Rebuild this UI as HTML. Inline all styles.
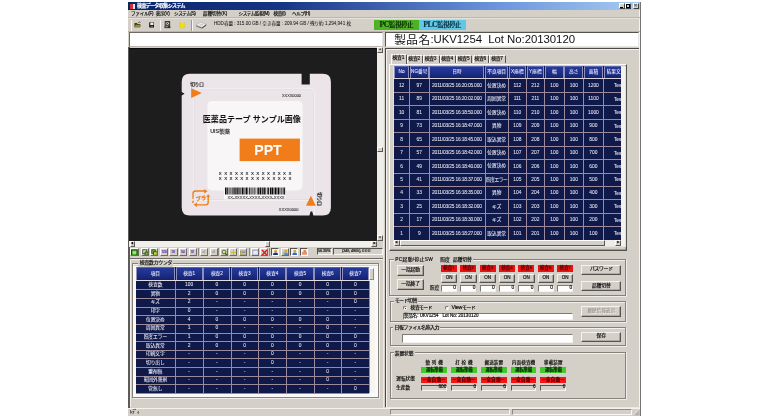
<!DOCTYPE html><html lang="ja"><head><meta charset="utf-8"><title>検査データ収集システム</title><style>
*{box-sizing:border-box;margin:0;padding:0}
html,body{width:768px;height:420px;overflow:hidden;background:#fff}
body{position:relative;filter:blur(0.4px);font-family:"Liberation Sans","Noto Sans CJK JP",sans-serif;font-size:5px;color:#000;line-height:1}
.a{position:absolute}
.t{position:absolute;white-space:nowrap;line-height:1;-webkit-text-stroke:0.18px}
.c{text-align:center}
.r{text-align:right}
.btn{position:absolute;background:#d4d0c8;border:0.8px solid;border-color:#f4f2ee #55534f #55534f #f4f2ee;box-shadow:inset -0.6px -0.6px 0 #8d8a84}
.sunk{position:absolute;background:#fff;border:0.8px solid;border-color:#7d7a74 #f4f2ee #f4f2ee #7d7a74}
.grp{position:absolute;border:0.8px solid #85827c;box-shadow:0.7px 0.7px 0 #fbfaf8, inset 0.7px 0.7px 0 #fbfaf8}
.hc{position:absolute;background:linear-gradient(180deg,#253a9c 0%,#1c2e88 55%,#15226c 100%);border:0.6px solid #8f8fba;border-top-color:#5a64a8;border-bottom:none;color:#fff}
.w{-webkit-text-stroke:0.06px}
</style></head><body>
<div class="a" style="left:128.00px;top:2.00px;width:513.00px;height:414.00px;background:#d4d0c8;"></div>
<div class="a" style="left:640.00px;top:2.00px;width:1.00px;height:414.00px;background:#777571;"></div>
<div class="a" style="left:639.00px;top:10.00px;width:1.00px;height:406.00px;background:#f6f4f0;"></div>
<div class="a" style="left:128.00px;top:2.00px;width:512.00px;height:8.00px;background:linear-gradient(90deg,#0a246a 0%,#173587 30%,#6a95dc 72%,#a6caf0 100%);"></div>
<div class="a" style="left:130.30px;top:3.60px;width:2.60px;height:5.00px;background:#c83828;"></div>
<div class="a" style="left:132.90px;top:3.60px;width:2.60px;height:5.00px;background:#dfe4f8;"></div>
<div class="t" style="left:137.00px;top:3.60px;font-size:4.9px;color:#fff;font-weight:bold;letter-spacing:-0.514px;">検査データ収集システム</div>
<div class="a" style="left:618.60px;top:3.30px;width:6.20px;height:5.50px;background:#d4d0c8;border:0.7px solid;border-color:#fff #404040 #404040 #fff"></div>
<div class="a" style="left:625.00px;top:3.30px;width:6.20px;height:5.50px;background:#d4d0c8;border:0.7px solid;border-color:#fff #404040 #404040 #fff"></div>
<div class="a" style="left:632.60px;top:3.30px;width:6.20px;height:5.50px;background:#d4d0c8;border:0.7px solid;border-color:#fff #404040 #404040 #fff"></div>
<div class="a" style="left:620.00px;top:7.00px;width:2.80px;height:0.90px;background:#000;"></div>
<div class="a" style="left:626.40px;top:4.30px;width:3.60px;height:3.40px;background:transparent;border:0.7px solid #000;border-top-width:1.3px"></div>
<div class="t" style="left:633.90px;top:3.40px;font-size:5px;color:#555;font-weight:bold">×</div>
<div class="t" style="left:131.00px;top:11.80px;font-size:4.6px;color:#111;letter-spacing:-0.279px;">ファイル(F)</div>
<div class="t" style="left:155.70px;top:11.80px;font-size:4.6px;color:#111;letter-spacing:-0.302px;">表示(V)</div>
<div class="t" style="left:174.00px;top:11.80px;font-size:4.6px;color:#111;letter-spacing:-0.411px;">システム(S)</div>
<div class="t" style="left:202.80px;top:11.80px;font-size:4.6px;color:#111;letter-spacing:0.000px;">品種切替(K)</div>
<div class="t" style="left:238.50px;top:11.80px;font-size:4.6px;color:#111;letter-spacing:-0.424px;">システム監視(M)</div>
<div class="t" style="left:273.60px;top:11.80px;font-size:4.6px;color:#111;letter-spacing:-0.346px;">検査(I)</div>
<div class="t" style="left:291.90px;top:11.80px;font-size:4.6px;color:#111;letter-spacing:-0.345px;">ヘルプ(H)</div>
<div class="a" style="left:128.00px;top:16.90px;width:512.00px;height:0.60px;background:#bcb8b0;"></div>
<div class="a" style="left:128.00px;top:17.50px;width:512.00px;height:0.60px;background:#e4e1da;"></div>
<div class="a" style="left:128.00px;top:31.30px;width:512.00px;height:0.50px;background:#bab6ae;"></div>
<div class="a" style="left:130.50px;top:19.50px;width:0.70px;height:11.00px;background:#9c9890;"></div>
<div class="a" style="left:131.20px;top:19.50px;width:0.70px;height:11.00px;background:#f8f6f2;"></div>
<div class="a" style="left:159.50px;top:19.50px;width:0.70px;height:11.00px;background:#9c9890;"></div>
<div class="a" style="left:160.20px;top:19.50px;width:0.70px;height:11.00px;background:#f8f6f2;"></div>
<div class="a" style="left:191.30px;top:19.50px;width:0.70px;height:11.00px;background:#9c9890;"></div>
<div class="a" style="left:192.00px;top:19.50px;width:0.70px;height:11.00px;background:#f8f6f2;"></div>
<svg class="a" style="left:133.6px;top:21.2px" width="7.4" height="6.8" viewBox="0 0 10 9"><path d="M0.6 2.6 L4 2.6 L5 3.8 L8.4 3.8 L8.4 8.4 L0.6 8.4 Z" fill="#3c3b12"/><path d="M2.2 5 L9.6 5 L8.2 8.4 L0.6 8.4 Z" fill="#8f8c3a"/><path d="M5.5 2.3 Q7 0.4 8.8 2" stroke="#222" stroke-width="0.9" fill="none"/></svg>
<svg class="a" style="left:148.6px;top:21.8px" width="5.8" height="5.8" viewBox="0 0 8 8"><rect x="0.3" y="0.3" width="7.4" height="7.4" rx="0.8" fill="#111"/><rect x="1.8" y="0.8" width="4.4" height="3.4" fill="#f2f2f2"/><rect x="2.2" y="5.4" width="3.4" height="2.3" fill="#666"/></svg>
<svg class="a" style="left:164px;top:20.8px" width="7" height="7.8" viewBox="0 0 9 10"><rect x="1.5" y="0.8" width="5.8" height="4.6" fill="#e8e8e8" stroke="#111" stroke-width="1.1"/><path d="M2.5 1.5 L6.2 4.6 M6.2 1.5 L2.5 4.6" stroke="#222" stroke-width="0.9"/><rect x="0.6" y="6.2" width="7.6" height="3" fill="#333"/><rect x="2" y="7" width="3" height="0.9" fill="#ddd"/></svg>
<svg class="a" style="left:179px;top:20.8px" width="6.2" height="7.8" viewBox="0 0 8 10"><path d="M1 2.2 L3 2.2 L3.6 1 L6 1 L6.6 2.2 L7 2.2 L7 8.8 L1 8.8 Z" fill="#f5e000" stroke="#d8c400" stroke-width="0.5"/><rect x="3" y="0.4" width="2.5" height="1.5" fill="#f4f4f4" stroke="#bbb" stroke-width="0.3"/></svg>
<svg class="a" style="left:194.8px;top:20.6px" width="12.4" height="8.4" viewBox="0 0 14 10"><path d="M0.8 5 L6 1.5 L13 3.8 L8 7.6 Z" fill="#f0f0f0" stroke="#9a9a9a" stroke-width="0.5"/><path d="M0.8 5 L8 7.6 L8 9.2 L0.8 6.6 Z" fill="#7a7a7a"/><path d="M8 7.6 L13 3.8 L13 5.4 L8 9.2 Z" fill="#4a4a4a"/><ellipse cx="7" cy="4.4" rx="2.6" ry="1.2" fill="#d0d0d0"/></svg>
<div class="t" style="left:214.00px;top:21.80px;font-size:4.6px;color:#222;-webkit-text-stroke:0.05px;letter-spacing:-0.021px;">HDD容量 : 315.00 GB / 空き容量 : 209.94 GB / 残り約 1,294,941 枚</div>
<div class="a" style="left:374.00px;top:20.30px;width:44.50px;height:10.00px;background:#4db324;"></div>
<div class="t" style="left:396.20px;top:21.60px;font-size:6.6px;color:#0c2a08;transform:translateX(-50%);font-family:'Liberation Serif','Noto Serif CJK SC',serif;font-weight:bold;-webkit-text-stroke:0.1px;letter-spacing:-0.608px;"><span style="font-size:8px;line-height:0">PC</span>監視停止</div>
<div class="a" style="left:418.50px;top:20.30px;width:47.00px;height:10.00px;background:#5ec8e6;"></div>
<div class="t" style="left:442.00px;top:21.60px;font-size:6.6px;color:#0a2a38;transform:translateX(-50%);font-family:'Liberation Serif','Noto Serif CJK SC',serif;font-weight:bold;-webkit-text-stroke:0.1px;letter-spacing:-0.711px;"><span style="font-size:8px;line-height:0">PLC</span>監視停止</div>
<div class="a" style="left:128.60px;top:32.20px;width:254.60px;height:14.60px;background:#fff;border:1px solid;border-color:#6e6b66 #e8e6e0 #bdb9b0 #6e6b66"></div>
<div class="a" style="left:384.80px;top:32.00px;width:254.00px;height:15.20px;background:#fff;border:1px solid;border-color:#55534f #e8e6e0 #e8e6e0 #55534f;border-left-width:1.3px"></div>
<div class="t" style="left:394.20px;top:33.50px;font-size:11.6px;color:#111;-webkit-text-stroke:0;letter-spacing:0.534px;">製品名</div>
<div class="t" style="left:430.40px;top:33.90px;font-size:11.4px;color:#111;-webkit-text-stroke:0;letter-spacing:-0.043px;">:UKV1254&nbsp; Lot No:20130120</div>
<div class="a" style="left:128.30px;top:47.00px;width:1.30px;height:360.50px;background:#5d5b57;"></div>
<div class="a" style="left:129.30px;top:47.70px;width:248.20px;height:193.10px;background:#1d1d1d;border-top:0.8px solid #0a0a0a"></div>
<div class="a" style="left:377.30px;top:47.20px;width:5.80px;height:193.60px;background:#efede8;"></div>
<div class="a" style="left:377.40px;top:47.40px;width:5.60px;height:5.80px;background:#d4d0c8;border:0.6px solid;border-color:#fff #5a5852 #5a5852 #fff"></div>
<div class="a" style="left:377.40px;top:234.80px;width:5.60px;height:5.80px;background:#d4d0c8;border:0.6px solid;border-color:#fff #5a5852 #5a5852 #fff"></div>
<div class="a" style="left:377.40px;top:146.70px;width:5.60px;height:5.80px;background:#d4d0c8;border:0.6px solid;border-color:#fff #5a5852 #5a5852 #fff"></div>
<div class="t" style="left:378.70px;top:49.20px;font-size:2.6px;color:#000;">▲</div>
<div class="t" style="left:378.70px;top:236.60px;font-size:2.6px;color:#000;">▼</div>
<div class="a" style="left:129.30px;top:240.80px;width:248.20px;height:6.00px;background:#f1efea;"></div>
<div class="a" style="left:129.50px;top:241.00px;width:5.60px;height:5.60px;background:#d4d0c8;border:0.6px solid;border-color:#fff #5a5852 #5a5852 #fff"></div>
<div class="a" style="left:371.40px;top:241.00px;width:5.60px;height:5.60px;background:#d4d0c8;border:0.6px solid;border-color:#fff #5a5852 #5a5852 #fff"></div>
<div class="a" style="left:264.50px;top:241.00px;width:5.60px;height:5.60px;background:#d4d0c8;border:0.6px solid;border-color:#fff #5a5852 #5a5852 #fff"></div>
<div class="t" style="left:130.80px;top:242.50px;font-size:2.6px;color:#000;">◀</div>
<div class="t" style="left:373.20px;top:242.50px;font-size:2.6px;color:#000;">▶</div>
<div class="a" style="left:377.30px;top:240.80px;width:5.80px;height:6.00px;background:#d4d0c8;"></div>
<svg class="a" style="left:170px;top:60px" width="170" height="165" viewBox="170 60 170 165" font-family="'Liberation Sans','Noto Sans CJK JP',sans-serif">
<path d="M189.7 73.7 L301.6 73.7 L301.6 84.6 L309.8 84.6 L309.8 73.7 L322.9 73.7 Q330.9 73.7 330.9 81.7 L330.9 207.5 Q330.9 215.5 322.9 215.5 L313.4 215.5 L312.2 211.6 L310.6 211.6 L309.4 215.5 L189.7 215.5 Q181.7 215.5 181.7 207.5 L181.7 95.6 L184.6 93.8 L181.7 92 L181.7 81.7 Q181.7 73.7 189.7 73.7 Z" fill="#ebe5ea"/>
<rect x="193.8" y="88.4" width="120.4" height="112" rx="5" fill="none" stroke="#f6f3f5" stroke-width="0.9"/>
<path d="M314.2 195 L314.2 215" stroke="#f6f3f5" stroke-width="0.9"/>
<rect x="194.6" y="89.2" width="118.8" height="110.4" rx="4.4" fill="none" stroke="#ddd5dc" stroke-width="0.5"/>
<rect x="207.4" y="101" width="95.2" height="89.4" rx="4.5" fill="#f8f6f7"/>
<text x="190.3" y="85.6" font-size="4.2" fill="#1a1a1a" stroke="#1a1a1a" stroke-width="0.18" textLength="13.6" lengthAdjust="spacingAndGlyphs">切り口</text>
<path d="M191.2 88.2 L201.8 93.1 L191.2 98 Z" fill="#f07d1a"/>
<text x="282" y="96.5" font-size="4" fill="#222" stroke="#222" stroke-width="0.06" textLength="19" lengthAdjust="spacingAndGlyphs">XXXX0000</text>
<text x="202.8" y="122.3" font-size="8.4" font-weight="bold" fill="#111" textLength="98" lengthAdjust="spacingAndGlyphs">医薬品テープ サンプル画像</text>
<text x="210.2" y="133.2" font-size="4.9" fill="#222" stroke="#222" stroke-width="0.15" textLength="19.8" lengthAdjust="spacingAndGlyphs">UIS製薬</text>
<rect x="239.6" y="138.6" width="60.3" height="22.5" fill="#f07d1a"/>
<text x="254.2" y="155.4" font-size="14.8" font-weight="bold" fill="#fff" textLength="27.6" lengthAdjust="spacingAndGlyphs">PPT</text>
<text x="218.8" y="174.5" font-size="4.4" font-weight="bold" fill="#2a2a2a" textLength="72.6" lengthAdjust="spacing">XXXXXXXXXXXXXX</text>
<text x="218.8" y="180.4" font-size="4.4" font-weight="bold" fill="#2a2a2a" textLength="72.6" lengthAdjust="spacing">XXXXXXXXXXXXXX</text>
<rect x="224" y="186.8" width="61.4" height="12.6" fill="#f8f6f7"/>
<path d="M225.0 187.6 v6.8 h1.0 v-6.8 Z M226.4 187.6 v6.8 h1.4 v-6.8 Z M228.6 187.6 v6.8 h0.6 v-6.8 Z M229.7 187.6 v6.8 h0.6 v-6.8 Z M230.8 187.6 v6.8 h0.6 v-6.8 Z M232.2 187.6 v6.8 h0.6 v-6.8 Z M233.2 187.6 v6.8 h0.6 v-6.8 Z M234.3 187.6 v6.8 h1.4 v-6.8 Z M236.2 187.6 v6.8 h0.6 v-6.8 Z M237.2 187.6 v6.8 h1.4 v-6.8 Z M239.1 187.6 v6.8 h0.6 v-6.8 Z M240.2 187.6 v6.8 h0.6 v-6.8 Z M241.6 187.6 v6.8 h1.4 v-6.8 Z M243.4 187.6 v6.8 h0.6 v-6.8 Z M244.5 187.6 v6.8 h0.6 v-6.8 Z M245.6 187.6 v6.8 h1.4 v-6.8 Z M247.4 187.6 v6.8 h0.6 v-6.8 Z M248.8 187.6 v6.8 h1.0 v-6.8 Z M250.6 187.6 v6.8 h0.6 v-6.8 Z M251.7 187.6 v6.8 h0.6 v-6.8 Z M252.8 187.6 v6.8 h0.6 v-6.8 Z M254.2 187.6 v6.8 h0.6 v-6.8 Z M255.6 187.6 v6.8 h0.6 v-6.8 Z M257.0 187.6 v6.8 h0.6 v-6.8 Z M258.1 187.6 v6.8 h1.4 v-6.8 Z M260.0 187.6 v6.8 h1.4 v-6.8 Z M262.2 187.6 v6.8 h1.4 v-6.8 Z M264.1 187.6 v6.8 h1.0 v-6.8 Z M265.5 187.6 v6.8 h0.6 v-6.8 Z M266.9 187.6 v6.8 h0.6 v-6.8 Z M267.9 187.6 v6.8 h1.0 v-6.8 Z M269.8 187.6 v6.8 h1.4 v-6.8 Z M271.6 187.6 v6.8 h1.4 v-6.8 Z M273.5 187.6 v6.8 h0.6 v-6.8 Z M274.6 187.6 v6.8 h1.4 v-6.8 Z M276.4 187.6 v6.8 h1.0 v-6.8 Z M277.9 187.6 v6.8 h1.4 v-6.8 Z M279.8 187.6 v6.8 h0.6 v-6.8 Z M281.2 187.6 v6.8 h0.6 v-6.8 Z M282.6 187.6 v6.8 h1.0 v-6.8 Z M284.1 187.6 v6.8 h1.0 v-6.8 Z" fill="#0c0c0c"/>
<text x="227.6" y="198.6" font-size="3.8" fill="#222" stroke="#222" stroke-width="0.05" textLength="57" lengthAdjust="spacingAndGlyphs">XX-XXXXX-XXXX-XXXX-XXXX</text>
<g fill="none" stroke="#f07d1a" stroke-width="1.35" stroke-linecap="round" stroke-linejoin="round"><path d="M193 198.2 L193 193.6 Q193 191 195.6 191 L204.6 191"/><path d="M208.2 196.4 L208.2 202.2 Q208.2 204.8 205.6 204.8 L196.6 204.8"/><path d="M193 201.2 L193 202.6"/></g>
<path d="M204.2 188.9 L207.6 191.2 L204.2 193.4 Z M197 202.5 L193.6 204.8 L197 207 Z M206.2 197 L208.2 194.2 L210.2 197 Z" fill="#f07d1a"/>
<text x="195.6" y="200.6" font-size="5.6" font-weight="bold" fill="#f07d1a" stroke="#f07d1a" stroke-width="0.25" textLength="10.4" lengthAdjust="spacingAndGlyphs" transform="rotate(-8 201 198)">プラ</text>
<path d="M306 205.8 L315.8 205.8 L310.9 195.8 Z" fill="#f07d1a"/>
<text x="0" y="0" font-size="4.2" fill="#1a1a1a" stroke="#1a1a1a" stroke-width="0.18" textLength="13.6" lengthAdjust="spacingAndGlyphs" transform="translate(317.6 192.2) rotate(90)">切り口</text>
<text x="278.8" y="210.9" font-size="4" fill="#222" stroke="#222" stroke-width="0.06" textLength="19.6" lengthAdjust="spacingAndGlyphs">XXXX0000</text>
</svg>
<div class="a" style="left:130.40px;top:247.6px;width:8.2px;height:8.4px;background:#d4d0c8;border:0.6px solid;border-color:#fff #6e6b66 #6e6b66 #fff;overflow:hidden"><svg class="a" style="left:0;top:0" width="7" height="7.2" viewBox="0 0 7 7.2"><rect x="0.6" y="0.9" width="5.6" height="5.4" fill="#58c030" stroke="#0a3a0a" stroke-width="1"/><rect x="1.8" y="2.1" width="3.2" height="3" fill="#9fe070"/></svg></div>
<div class="a" style="left:140.60px;top:247.6px;width:8.2px;height:8.4px;background:#d4d0c8;border:0.6px solid;border-color:#fff #6e6b66 #6e6b66 #fff;overflow:hidden"><svg class="a" style="left:0;top:0" width="7" height="7.2" viewBox="0 0 7 7.2"><rect x="0.8" y="0.8" width="4" height="4" fill="#d8e8c0" stroke="#284018" stroke-width="0.8"/><rect x="3" y="3" width="3.2" height="3.2" fill="#70b838" stroke="#284018" stroke-width="0.8"/></svg></div>
<div class="a" style="left:150.20px;top:247.6px;width:8.2px;height:8.4px;background:#d4d0c8;border:0.6px solid;border-color:#fff #6e6b66 #6e6b66 #fff;overflow:hidden"><svg class="a" style="left:0;top:0" width="7" height="7.2" viewBox="0 0 7 7.2"><rect x="0.8" y="0.8" width="3.4" height="3.4" fill="#70b838" stroke="#284018" stroke-width="0.8"/><rect x="2.6" y="2.8" width="3.6" height="3.4" fill="#c8d848" stroke="#284018" stroke-width="0.8"/></svg></div>
<div class="a" style="left:159.90px;top:247.6px;width:8.2px;height:8.4px;background:#d4d0c8;border:0.6px solid;border-color:#fff #6e6b66 #6e6b66 #fff;overflow:hidden"><div class="t" style="left:0.9px;top:2.2px;font-size:3px;color:#7040b0;letter-spacing:-0.2px">1/16</div></div>
<div class="a" style="left:169.40px;top:247.6px;width:8.2px;height:8.4px;background:#d4d0c8;border:0.6px solid;border-color:#fff #6e6b66 #6e6b66 #fff;overflow:hidden"><div class="t" style="left:0.9px;top:2.2px;font-size:3px;color:#7040b0;letter-spacing:-0.2px">1/8</div></div>
<div class="a" style="left:179.00px;top:247.6px;width:8.2px;height:8.4px;background:#d4d0c8;border:0.6px solid;border-color:#fff #6e6b66 #6e6b66 #fff;overflow:hidden"><div class="t" style="left:0.9px;top:2.2px;font-size:3px;color:#7040b0;letter-spacing:-0.2px">1/4</div></div>
<div class="a" style="left:188.60px;top:247.6px;width:8.2px;height:8.4px;background:#d4d0c8;border:0.6px solid;border-color:#fff #6e6b66 #6e6b66 #fff;overflow:hidden"><div class="t" style="left:0.9px;top:2.2px;font-size:3px;color:#7040b0;letter-spacing:-0.2px">1/2</div></div>
<div class="a" style="left:200.20px;top:247.6px;width:8.2px;height:8.4px;background:#d4d0c8;border:0.6px solid;border-color:#fff #6e6b66 #6e6b66 #fff;overflow:hidden"><div class="t" style="left:1.4px;top:2.2px;font-size:3px;color:#9a9890;letter-spacing:-0.2px">x1</div></div>
<div class="a" style="left:209.80px;top:247.6px;width:8.2px;height:8.4px;background:#d4d0c8;border:0.6px solid;border-color:#fff #6e6b66 #6e6b66 #fff;overflow:hidden"><div class="t" style="left:1.4px;top:2.2px;font-size:3px;color:#9a9890;letter-spacing:-0.2px">x2</div></div>
<div class="a" style="left:219.60px;top:247.6px;width:8.2px;height:8.4px;background:#d4d0c8;border:0.6px solid;border-color:#fff #6e6b66 #6e6b66 #fff;overflow:hidden"><svg class="a" style="left:0;top:0" width="7" height="7.2" viewBox="0 0 7 7.2"><circle cx="3" cy="3" r="1.9" fill="#d8e890" stroke="#405018" stroke-width="0.8"/><path d="M4.2 4.4 L6.2 6.4" stroke="#304010" stroke-width="1.1"/></svg></div>
<div class="a" style="left:229.20px;top:247.6px;width:8.2px;height:8.4px;background:#d4d0c8;border:0.6px solid;border-color:#fff #6e6b66 #6e6b66 #fff;overflow:hidden"><svg class="a" style="left:0;top:0" width="7" height="7.2" viewBox="0 0 7 7.2"><path d="M3.5 0.6 V6.6 M0.5 3.6 H6.5" stroke="#c8c020" stroke-width="1"/></svg></div>
<div class="a" style="left:238.80px;top:247.6px;width:8.2px;height:8.4px;background:#d4d0c8;border:0.6px solid;border-color:#fff #6e6b66 #6e6b66 #fff;overflow:hidden"><svg class="a" style="left:0;top:0" width="7" height="7.2" viewBox="0 0 7 7.2"><rect x="0.6" y="2" width="5.8" height="3.2" fill="#e8d820" stroke="#807810" stroke-width="0.5"/><rect x="1.6" y="2.8" width="3.8" height="1.2" fill="#8088c0"/></svg></div>
<div class="a" style="left:250.60px;top:247.6px;width:8.2px;height:8.4px;background:#d4d0c8;border:0.6px solid;border-color:#fff #6e6b66 #6e6b66 #fff;overflow:hidden"><svg class="a" style="left:0;top:0" width="7" height="7.2" viewBox="0 0 7 7.2"><rect x="0.8" y="1.2" width="5.4" height="4.8" fill="#e8ecf8" stroke="#8890b0" stroke-width="0.7"/></svg></div>
<div class="a" style="left:260.20px;top:247.6px;width:8.2px;height:8.4px;background:#d4d0c8;border:0.6px solid;border-color:#fff #6e6b66 #6e6b66 #fff;overflow:hidden"><svg class="a" style="left:0;top:0" width="7" height="7.2" viewBox="0 0 7 7.2"><path d="M1 1 L6 6.2 M6 1 L1 6.2" stroke="#e01818" stroke-width="1.4"/></svg></div>
<div class="a" style="left:271.00px;top:247.6px;width:8.2px;height:8.4px;background:#f4f2ee;border:0.6px solid;border-color:#55534f #fff #fff #55534f;overflow:hidden"><svg class="a" style="left:0;top:0" width="7" height="7.2" viewBox="0 0 7 7.2"><circle cx="3.6" cy="2.2" r="1.4" fill="#f0a020"/><path d="M0.8 6.4 Q0.8 3.6 3.6 3.6 Q6.4 3.6 6.4 6.4 Z" fill="#183878"/></svg></div>
<div class="a" style="left:280.60px;top:247.6px;width:8.2px;height:8.4px;background:#d4d0c8;border:0.6px solid;border-color:#fff #6e6b66 #6e6b66 #fff;overflow:hidden"><svg class="a" style="left:0;top:0" width="7" height="7.2" viewBox="0 0 7 7.2"><circle cx="3.8" cy="2.2" r="1.4" fill="#f0a020"/><path d="M1 6.4 Q1 3.6 3.8 3.6 Q6.4 3.6 6.4 6.4 Z" fill="#5888d0"/><rect x="0.4" y="3" width="2" height="3.4" fill="#a8c0a0"/></svg></div>
<div class="a" style="left:290.20px;top:247.6px;width:8.2px;height:8.4px;background:#f4f2ee;border:0.6px solid;border-color:#55534f #fff #fff #55534f;overflow:hidden"><svg class="a" style="left:0;top:0" width="7" height="7.2" viewBox="0 0 7 7.2"><circle cx="3.8" cy="2.2" r="1.4" fill="#f0a020"/><path d="M1.2 6.4 Q1.2 3.6 3.8 3.6 Q6.4 3.6 6.4 6.4 Z" fill="#3868c8"/></svg></div>
<div class="a" style="left:299.80px;top:247.6px;width:8.2px;height:8.4px;background:#f4f2ee;border:0.6px solid;border-color:#55534f #fff #fff #55534f;overflow:hidden"><svg class="a" style="left:0;top:0" width="7" height="7.2" viewBox="0 0 7 7.2"><circle cx="3.8" cy="2.2" r="1.4" fill="#f08830"/><path d="M1 6.4 L1 3.8 L6.2 3.8 L6.2 6.4 Z" fill="#e8a890"/><path d="M1 3.8 H6.2" stroke="#d04020" stroke-width="0.6"/></svg></div>
<div class="a" style="left:198.3px;top:247.8px;width:0.7px;height:8px;background:#8d8a84"></div>
<div class="a" style="left:217.8px;top:247.8px;width:0.7px;height:8px;background:#8d8a84"></div>
<div class="a" style="left:248.6px;top:247.8px;width:0.7px;height:8px;background:#8d8a84"></div>
<div class="a" style="left:269.2px;top:247.8px;width:0.7px;height:8px;background:#8d8a84"></div>
<div class="a" style="left:316.6px;top:248.2px;width:15.4px;height:6.6px;border:0.7px solid;border-color:#55534f #f8f7f4 #f8f7f4 #55534f"></div>
<div class="t" style="left:318px;top:249.6px;font-size:3.8px;color:#222;letter-spacing:-0.1px">56.30%</div>
<div class="a" style="left:333.2px;top:248.2px;width:49.6px;height:6.6px;border:0.7px solid;border-color:#55534f #f8f7f4 #f8f7f4 #55534f"></div>
<div class="t" style="left:342px;top:249.6px;font-size:3.8px;color:#222;letter-spacing:-0.1px">(348, 4965), 0 0 0</div>
<div class="a" style="left:129.50px;top:258.20px;width:253.60px;height:0.80px;background:#6e6b66;"></div>
<div class="a" style="left:129.80px;top:259.10px;width:253.30px;height:0.70px;background:#f2f0ec;"></div>
<div class="a" style="left:129.80px;top:259.10px;width:0.80px;height:148.00px;background:#f2f0ec;"></div>
<div class="grp" style="left:132.30px;top:262.80px;width:246.50px;height:135.60px;"></div>
<div class="a" style="left:133.30px;top:266.20px;width:244.60px;height:130.70px;background:#fbfaf9;"></div>
<div class="a" style="left:138.40px;top:260.60px;width:35.00px;height:6.00px;background:#d4d0c8;"></div>
<div class="t" style="left:139.80px;top:261.00px;font-size:4.8px;color:#111;letter-spacing:-0.171px;">検査数カウンタ</div>
<div class="a" style="left:135.80px;top:267.40px;width:233.20px;height:126.10px;background:#101a4a;"></div>
<div class="a" style="left:369.00px;top:267.40px;width:5.60px;height:126.10px;background:#f6f5f2;"></div>
<div class="a" style="left:369.10px;top:267.50px;width:5.40px;height:12.00px;background:#d4d0c8;border:0.6px solid;border-color:#fff #8d8a84 #8d8a84 #fff"></div>
<div class="hc" style="left:135.80px;top:267.40px;width:39.15px;height:12.20px;"></div>
<div class="t w" style="left:155.38px;top:271.80px;font-size:4.7px;color:#f4f4ff;transform:translateX(-50%);">項目</div>
<div class="hc" style="left:175.65px;top:267.40px;width:27.00px;height:12.20px;"></div>
<div class="t w" style="left:189.15px;top:271.80px;font-size:4.7px;color:#f4f4ff;transform:translateX(-50%);">検査1</div>
<div class="hc" style="left:203.35px;top:267.40px;width:27.10px;height:12.20px;"></div>
<div class="t w" style="left:216.90px;top:271.80px;font-size:4.7px;color:#f4f4ff;transform:translateX(-50%);">検査2</div>
<div class="hc" style="left:231.15px;top:267.40px;width:26.90px;height:12.20px;"></div>
<div class="t w" style="left:244.60px;top:271.80px;font-size:4.7px;color:#f4f4ff;transform:translateX(-50%);">検査3</div>
<div class="hc" style="left:258.75px;top:267.40px;width:27.00px;height:12.20px;"></div>
<div class="t w" style="left:272.25px;top:271.80px;font-size:4.7px;color:#f4f4ff;transform:translateX(-50%);">検査4</div>
<div class="hc" style="left:286.45px;top:267.40px;width:27.10px;height:12.20px;"></div>
<div class="t w" style="left:300.00px;top:271.80px;font-size:4.7px;color:#f4f4ff;transform:translateX(-50%);">検査5</div>
<div class="hc" style="left:314.25px;top:267.40px;width:26.90px;height:12.20px;"></div>
<div class="t w" style="left:327.70px;top:271.80px;font-size:4.7px;color:#f4f4ff;transform:translateX(-50%);">検査6</div>
<div class="hc" style="left:341.85px;top:267.40px;width:26.80px;height:12.20px;"></div>
<div class="t w" style="left:355.25px;top:271.80px;font-size:4.7px;color:#f4f4ff;transform:translateX(-50%);">検査7</div>
<div class="t w" style="left:155.38px;top:283.03px;font-size:4.7px;color:#eeeef8;transform:translateX(-50%);">検査数</div>
<div class="t w" style="left:189.15px;top:283.03px;font-size:4.9px;color:#e4e4f0;transform:translateX(-50%);">100</div>
<div class="t w" style="left:216.90px;top:283.03px;font-size:4.9px;color:#e4e4f0;transform:translateX(-50%);">0</div>
<div class="t w" style="left:244.60px;top:283.03px;font-size:4.9px;color:#e4e4f0;transform:translateX(-50%);">0</div>
<div class="t w" style="left:272.25px;top:283.03px;font-size:4.9px;color:#e4e4f0;transform:translateX(-50%);">0</div>
<div class="t w" style="left:300.00px;top:283.03px;font-size:4.9px;color:#e4e4f0;transform:translateX(-50%);">0</div>
<div class="t w" style="left:327.70px;top:283.03px;font-size:4.9px;color:#e4e4f0;transform:translateX(-50%);">0</div>
<div class="t w" style="left:355.25px;top:283.03px;font-size:4.9px;color:#e4e4f0;transform:translateX(-50%);">0</div>
<div class="a" style="left:135.80px;top:289.21px;width:233.20px;height:0.60px;background:#9c8a9c;"></div>
<div class="t w" style="left:155.38px;top:291.69px;font-size:4.7px;color:#eeeef8;transform:translateX(-50%);">異物</div>
<div class="t w" style="left:189.15px;top:291.69px;font-size:4.9px;color:#e4e4f0;transform:translateX(-50%);">2</div>
<div class="t w" style="left:216.90px;top:291.69px;font-size:4.9px;color:#e4e4f0;transform:translateX(-50%);">0</div>
<div class="t w" style="left:244.60px;top:291.69px;font-size:4.9px;color:#e4e4f0;transform:translateX(-50%);">0</div>
<div class="t w" style="left:272.25px;top:291.69px;font-size:4.9px;color:#e4e4f0;transform:translateX(-50%);">0</div>
<div class="t w" style="left:300.00px;top:291.69px;font-size:4.9px;color:#e4e4f0;transform:translateX(-50%);">0</div>
<div class="t w" style="left:327.70px;top:291.69px;font-size:4.9px;color:#e4e4f0;transform:translateX(-50%);">0</div>
<div class="t w" style="left:355.25px;top:291.69px;font-size:4.9px;color:#e4e4f0;transform:translateX(-50%);">0</div>
<div class="a" style="left:135.80px;top:297.87px;width:233.20px;height:0.60px;background:#9c8a9c;"></div>
<div class="t w" style="left:155.38px;top:300.35px;font-size:4.7px;color:#eeeef8;transform:translateX(-50%);">キズ</div>
<div class="t w" style="left:189.15px;top:300.35px;font-size:4.9px;color:#e4e4f0;transform:translateX(-50%);">2</div>
<div class="t w" style="left:216.90px;top:300.35px;font-size:4.9px;color:#e4e4f0;transform:translateX(-50%);">-</div>
<div class="t w" style="left:244.60px;top:300.35px;font-size:4.9px;color:#e4e4f0;transform:translateX(-50%);">-</div>
<div class="t w" style="left:272.25px;top:300.35px;font-size:4.9px;color:#e4e4f0;transform:translateX(-50%);">-</div>
<div class="t w" style="left:300.00px;top:300.35px;font-size:4.9px;color:#e4e4f0;transform:translateX(-50%);">-</div>
<div class="t w" style="left:327.70px;top:300.35px;font-size:4.9px;color:#e4e4f0;transform:translateX(-50%);">-</div>
<div class="t w" style="left:355.25px;top:300.35px;font-size:4.9px;color:#e4e4f0;transform:translateX(-50%);">0</div>
<div class="a" style="left:135.80px;top:306.53px;width:233.20px;height:0.60px;background:#9c8a9c;"></div>
<div class="t w" style="left:155.38px;top:309.01px;font-size:4.7px;color:#eeeef8;transform:translateX(-50%);">印字</div>
<div class="t w" style="left:189.15px;top:309.01px;font-size:4.9px;color:#e4e4f0;transform:translateX(-50%);">0</div>
<div class="t w" style="left:216.90px;top:309.01px;font-size:4.9px;color:#e4e4f0;transform:translateX(-50%);">-</div>
<div class="t w" style="left:244.60px;top:309.01px;font-size:4.9px;color:#e4e4f0;transform:translateX(-50%);">-</div>
<div class="t w" style="left:272.25px;top:309.01px;font-size:4.9px;color:#e4e4f0;transform:translateX(-50%);">-</div>
<div class="t w" style="left:300.00px;top:309.01px;font-size:4.9px;color:#e4e4f0;transform:translateX(-50%);">-</div>
<div class="t w" style="left:327.70px;top:309.01px;font-size:4.9px;color:#e4e4f0;transform:translateX(-50%);">-</div>
<div class="t w" style="left:355.25px;top:309.01px;font-size:4.9px;color:#e4e4f0;transform:translateX(-50%);">-</div>
<div class="a" style="left:135.80px;top:315.19px;width:233.20px;height:0.60px;background:#9c8a9c;"></div>
<div class="t w" style="left:155.38px;top:317.67px;font-size:4.7px;color:#eeeef8;transform:translateX(-50%);">位置決め</div>
<div class="t w" style="left:189.15px;top:317.67px;font-size:4.9px;color:#e4e4f0;transform:translateX(-50%);">4</div>
<div class="t w" style="left:216.90px;top:317.67px;font-size:4.9px;color:#e4e4f0;transform:translateX(-50%);">0</div>
<div class="t w" style="left:244.60px;top:317.67px;font-size:4.9px;color:#e4e4f0;transform:translateX(-50%);">0</div>
<div class="t w" style="left:272.25px;top:317.67px;font-size:4.9px;color:#e4e4f0;transform:translateX(-50%);">0</div>
<div class="t w" style="left:300.00px;top:317.67px;font-size:4.9px;color:#e4e4f0;transform:translateX(-50%);">0</div>
<div class="t w" style="left:327.70px;top:317.67px;font-size:4.9px;color:#e4e4f0;transform:translateX(-50%);">0</div>
<div class="t w" style="left:355.25px;top:317.67px;font-size:4.9px;color:#e4e4f0;transform:translateX(-50%);">-</div>
<div class="a" style="left:135.80px;top:323.85px;width:233.20px;height:0.60px;background:#9c8a9c;"></div>
<div class="t w" style="left:155.38px;top:326.33px;font-size:4.7px;color:#eeeef8;transform:translateX(-50%);">周囲異常</div>
<div class="t w" style="left:189.15px;top:326.33px;font-size:4.9px;color:#e4e4f0;transform:translateX(-50%);">1</div>
<div class="t w" style="left:216.90px;top:326.33px;font-size:4.9px;color:#e4e4f0;transform:translateX(-50%);">0</div>
<div class="t w" style="left:244.60px;top:326.33px;font-size:4.9px;color:#e4e4f0;transform:translateX(-50%);">-</div>
<div class="t w" style="left:272.25px;top:326.33px;font-size:4.9px;color:#e4e4f0;transform:translateX(-50%);">-</div>
<div class="t w" style="left:300.00px;top:326.33px;font-size:4.9px;color:#e4e4f0;transform:translateX(-50%);">-</div>
<div class="t w" style="left:327.70px;top:326.33px;font-size:4.9px;color:#e4e4f0;transform:translateX(-50%);">0</div>
<div class="t w" style="left:355.25px;top:326.33px;font-size:4.9px;color:#e4e4f0;transform:translateX(-50%);">-</div>
<div class="a" style="left:135.80px;top:332.51px;width:233.20px;height:0.60px;background:#9c8a9c;"></div>
<div class="t w" style="left:155.38px;top:334.99px;font-size:4.7px;color:#eeeef8;transform:translateX(-50%);">照度エラー</div>
<div class="t w" style="left:189.15px;top:334.99px;font-size:4.9px;color:#e4e4f0;transform:translateX(-50%);">1</div>
<div class="t w" style="left:216.90px;top:334.99px;font-size:4.9px;color:#e4e4f0;transform:translateX(-50%);">0</div>
<div class="t w" style="left:244.60px;top:334.99px;font-size:4.9px;color:#e4e4f0;transform:translateX(-50%);">0</div>
<div class="t w" style="left:272.25px;top:334.99px;font-size:4.9px;color:#e4e4f0;transform:translateX(-50%);">0</div>
<div class="t w" style="left:300.00px;top:334.99px;font-size:4.9px;color:#e4e4f0;transform:translateX(-50%);">0</div>
<div class="t w" style="left:327.70px;top:334.99px;font-size:4.9px;color:#e4e4f0;transform:translateX(-50%);">0</div>
<div class="t w" style="left:355.25px;top:334.99px;font-size:4.9px;color:#e4e4f0;transform:translateX(-50%);">0</div>
<div class="a" style="left:135.80px;top:341.17px;width:233.20px;height:0.60px;background:#9c8a9c;"></div>
<div class="t w" style="left:155.38px;top:343.65px;font-size:4.7px;color:#eeeef8;transform:translateX(-50%);">取込異常</div>
<div class="t w" style="left:189.15px;top:343.65px;font-size:4.9px;color:#e4e4f0;transform:translateX(-50%);">2</div>
<div class="t w" style="left:216.90px;top:343.65px;font-size:4.9px;color:#e4e4f0;transform:translateX(-50%);">0</div>
<div class="t w" style="left:244.60px;top:343.65px;font-size:4.9px;color:#e4e4f0;transform:translateX(-50%);">0</div>
<div class="t w" style="left:272.25px;top:343.65px;font-size:4.9px;color:#e4e4f0;transform:translateX(-50%);">0</div>
<div class="t w" style="left:300.00px;top:343.65px;font-size:4.9px;color:#e4e4f0;transform:translateX(-50%);">0</div>
<div class="t w" style="left:327.70px;top:343.65px;font-size:4.9px;color:#e4e4f0;transform:translateX(-50%);">0</div>
<div class="t w" style="left:355.25px;top:343.65px;font-size:4.9px;color:#e4e4f0;transform:translateX(-50%);">0</div>
<div class="a" style="left:135.80px;top:349.83px;width:233.20px;height:0.60px;background:#9c8a9c;"></div>
<div class="t w" style="left:155.38px;top:352.31px;font-size:4.7px;color:#eeeef8;transform:translateX(-50%);">印刷文字</div>
<div class="t w" style="left:189.15px;top:352.31px;font-size:4.9px;color:#e4e4f0;transform:translateX(-50%);">-</div>
<div class="t w" style="left:216.90px;top:352.31px;font-size:4.9px;color:#e4e4f0;transform:translateX(-50%);">-</div>
<div class="t w" style="left:244.60px;top:352.31px;font-size:4.9px;color:#e4e4f0;transform:translateX(-50%);">-</div>
<div class="t w" style="left:272.25px;top:352.31px;font-size:4.9px;color:#e4e4f0;transform:translateX(-50%);">0</div>
<div class="t w" style="left:300.00px;top:352.31px;font-size:4.9px;color:#e4e4f0;transform:translateX(-50%);">-</div>
<div class="t w" style="left:327.70px;top:352.31px;font-size:4.9px;color:#e4e4f0;transform:translateX(-50%);">-</div>
<div class="t w" style="left:355.25px;top:352.31px;font-size:4.9px;color:#e4e4f0;transform:translateX(-50%);">-</div>
<div class="a" style="left:135.80px;top:358.49px;width:233.20px;height:0.60px;background:#9c8a9c;"></div>
<div class="t w" style="left:155.38px;top:360.97px;font-size:4.7px;color:#eeeef8;transform:translateX(-50%);">切り出し</div>
<div class="t w" style="left:189.15px;top:360.97px;font-size:4.9px;color:#e4e4f0;transform:translateX(-50%);">-</div>
<div class="t w" style="left:216.90px;top:360.97px;font-size:4.9px;color:#e4e4f0;transform:translateX(-50%);">-</div>
<div class="t w" style="left:244.60px;top:360.97px;font-size:4.9px;color:#e4e4f0;transform:translateX(-50%);">-</div>
<div class="t w" style="left:272.25px;top:360.97px;font-size:4.9px;color:#e4e4f0;transform:translateX(-50%);">0</div>
<div class="t w" style="left:300.00px;top:360.97px;font-size:4.9px;color:#e4e4f0;transform:translateX(-50%);">-</div>
<div class="t w" style="left:327.70px;top:360.97px;font-size:4.9px;color:#e4e4f0;transform:translateX(-50%);">-</div>
<div class="t w" style="left:355.25px;top:360.97px;font-size:4.9px;color:#e4e4f0;transform:translateX(-50%);">-</div>
<div class="a" style="left:135.80px;top:367.15px;width:233.20px;height:0.60px;background:#9c8a9c;"></div>
<div class="t w" style="left:155.38px;top:369.63px;font-size:4.7px;color:#eeeef8;transform:translateX(-50%);">重剤無</div>
<div class="t w" style="left:189.15px;top:369.63px;font-size:4.9px;color:#e4e4f0;transform:translateX(-50%);">-</div>
<div class="t w" style="left:216.90px;top:369.63px;font-size:4.9px;color:#e4e4f0;transform:translateX(-50%);">-</div>
<div class="t w" style="left:244.60px;top:369.63px;font-size:4.9px;color:#e4e4f0;transform:translateX(-50%);">-</div>
<div class="t w" style="left:272.25px;top:369.63px;font-size:4.9px;color:#e4e4f0;transform:translateX(-50%);">-</div>
<div class="t w" style="left:300.00px;top:369.63px;font-size:4.9px;color:#e4e4f0;transform:translateX(-50%);">-</div>
<div class="t w" style="left:327.70px;top:369.63px;font-size:4.9px;color:#e4e4f0;transform:translateX(-50%);">0</div>
<div class="t w" style="left:355.25px;top:369.63px;font-size:4.9px;color:#e4e4f0;transform:translateX(-50%);">-</div>
<div class="a" style="left:135.80px;top:375.81px;width:233.20px;height:0.60px;background:#9c8a9c;"></div>
<div class="t w" style="left:155.38px;top:378.29px;font-size:4.7px;color:#eeeef8;transform:translateX(-50%);">範囲外薬剤</div>
<div class="t w" style="left:189.15px;top:378.29px;font-size:4.9px;color:#e4e4f0;transform:translateX(-50%);">-</div>
<div class="t w" style="left:216.90px;top:378.29px;font-size:4.9px;color:#e4e4f0;transform:translateX(-50%);">-</div>
<div class="t w" style="left:244.60px;top:378.29px;font-size:4.9px;color:#e4e4f0;transform:translateX(-50%);">-</div>
<div class="t w" style="left:272.25px;top:378.29px;font-size:4.9px;color:#e4e4f0;transform:translateX(-50%);">-</div>
<div class="t w" style="left:300.00px;top:378.29px;font-size:4.9px;color:#e4e4f0;transform:translateX(-50%);">-</div>
<div class="t w" style="left:327.70px;top:378.29px;font-size:4.9px;color:#e4e4f0;transform:translateX(-50%);">0</div>
<div class="t w" style="left:355.25px;top:378.29px;font-size:4.9px;color:#e4e4f0;transform:translateX(-50%);">-</div>
<div class="a" style="left:135.80px;top:384.47px;width:233.20px;height:0.60px;background:#9c8a9c;"></div>
<div class="t w" style="left:155.38px;top:386.95px;font-size:4.7px;color:#eeeef8;transform:translateX(-50%);">管無し</div>
<div class="t w" style="left:189.15px;top:386.95px;font-size:4.9px;color:#e4e4f0;transform:translateX(-50%);">-</div>
<div class="t w" style="left:216.90px;top:386.95px;font-size:4.9px;color:#e4e4f0;transform:translateX(-50%);">-</div>
<div class="t w" style="left:244.60px;top:386.95px;font-size:4.9px;color:#e4e4f0;transform:translateX(-50%);">-</div>
<div class="t w" style="left:272.25px;top:386.95px;font-size:4.9px;color:#e4e4f0;transform:translateX(-50%);">-</div>
<div class="t w" style="left:300.00px;top:386.95px;font-size:4.9px;color:#e4e4f0;transform:translateX(-50%);">-</div>
<div class="t w" style="left:327.70px;top:386.95px;font-size:4.9px;color:#e4e4f0;transform:translateX(-50%);">-</div>
<div class="t w" style="left:355.25px;top:386.95px;font-size:4.9px;color:#e4e4f0;transform:translateX(-50%);">0</div>
<div class="a" style="left:135.80px;top:393.13px;width:233.20px;height:0.60px;background:#9c8a9c;"></div>
<div class="a" style="left:135.80px;top:279.60px;width:233.20px;height:1.30px;background:#e0dce4;"></div>
<div class="a" style="left:175.00px;top:280.90px;width:0.60px;height:112.58px;background:#9c8a9c;"></div>
<div class="a" style="left:202.70px;top:280.90px;width:0.60px;height:112.58px;background:#9c8a9c;"></div>
<div class="a" style="left:230.50px;top:280.90px;width:0.60px;height:112.58px;background:#9c8a9c;"></div>
<div class="a" style="left:258.10px;top:280.90px;width:0.60px;height:112.58px;background:#9c8a9c;"></div>
<div class="a" style="left:285.80px;top:280.90px;width:0.60px;height:112.58px;background:#9c8a9c;"></div>
<div class="a" style="left:313.60px;top:280.90px;width:0.60px;height:112.58px;background:#9c8a9c;"></div>
<div class="a" style="left:341.20px;top:280.90px;width:0.60px;height:112.58px;background:#9c8a9c;"></div>
<div class="a" style="left:368.70px;top:280.90px;width:0.60px;height:112.58px;background:#9c8a9c;"></div>
<div class="a" style="left:383.20px;top:47.00px;width:1.20px;height:360.50px;background:#ebe9e4;"></div>
<div class="a" style="left:384.60px;top:47.60px;width:1.40px;height:359.40px;background:#4c4a46;"></div>
<div class="a" style="left:385.00px;top:47.60px;width:253.80px;height:1.00px;background:#4c4a46;"></div>
<div class="a" style="left:386.20px;top:48.70px;width:253.80px;height:0.70px;background:#f4f2ee;"></div>
<div class="a" style="left:386.10px;top:48.70px;width:0.70px;height:358.00px;background:#f4f2ee;"></div>
<div class="a" style="left:386.20px;top:406.60px;width:253.80px;height:0.70px;background:#ebe9e4;"></div>
<div class="a" style="left:389.00px;top:63.60px;width:238.00px;height:187.60px;border:0.8px solid;border-color:#fbfaf8 #55534f #55534f #fbfaf8;box-shadow:inset -0.7px -0.7px 0 #8d8a84"></div>
<div class="a" style="left:391.00px;top:54.40px;width:15.90px;height:9.80px;background:#d4d0c8;border:0.7px solid;border-color:#fbfaf8 #55534f #d4d0c8 #fbfaf8;border-bottom:none;border-radius:1px 1px 0 0"></div>
<div class="t" style="left:398.35px;top:55.70px;font-size:4.8px;color:#111;transform:translateX(-50%);letter-spacing:-0.222px;">検査1</div>
<div class="a" style="left:406.90px;top:55.40px;width:15.70px;height:8.00px;background:#d4d0c8;border:0.7px solid;border-color:#fbfaf8 #55534f #d4d0c8 #fbfaf8;border-bottom:none;border-radius:1px 1px 0 0"></div>
<div class="t" style="left:414.15px;top:56.60px;font-size:4.8px;color:#111;transform:translateX(-50%);letter-spacing:-0.222px;">検査2</div>
<div class="a" style="left:422.60px;top:55.40px;width:17.00px;height:8.00px;background:#d4d0c8;border:0.7px solid;border-color:#fbfaf8 #55534f #d4d0c8 #fbfaf8;border-bottom:none;border-radius:1px 1px 0 0"></div>
<div class="t" style="left:430.50px;top:56.60px;font-size:4.8px;color:#111;transform:translateX(-50%);letter-spacing:-0.222px;">検査3</div>
<div class="a" style="left:439.60px;top:55.40px;width:16.20px;height:8.00px;background:#d4d0c8;border:0.7px solid;border-color:#fbfaf8 #55534f #d4d0c8 #fbfaf8;border-bottom:none;border-radius:1px 1px 0 0"></div>
<div class="t" style="left:447.10px;top:56.60px;font-size:4.8px;color:#111;transform:translateX(-50%);letter-spacing:-0.222px;">検査4</div>
<div class="a" style="left:455.80px;top:55.40px;width:16.70px;height:8.00px;background:#d4d0c8;border:0.7px solid;border-color:#fbfaf8 #55534f #d4d0c8 #fbfaf8;border-bottom:none;border-radius:1px 1px 0 0"></div>
<div class="t" style="left:463.55px;top:56.60px;font-size:4.8px;color:#111;transform:translateX(-50%);letter-spacing:-0.222px;">検査5</div>
<div class="a" style="left:472.50px;top:55.40px;width:16.70px;height:8.00px;background:#d4d0c8;border:0.7px solid;border-color:#fbfaf8 #55534f #d4d0c8 #fbfaf8;border-bottom:none;border-radius:1px 1px 0 0"></div>
<div class="t" style="left:480.25px;top:56.60px;font-size:4.8px;color:#111;transform:translateX(-50%);letter-spacing:-0.222px;">検査6</div>
<div class="a" style="left:489.20px;top:55.40px;width:16.80px;height:8.00px;background:#d4d0c8;border:0.7px solid;border-color:#fbfaf8 #55534f #d4d0c8 #fbfaf8;border-bottom:none;border-radius:1px 1px 0 0"></div>
<div class="t" style="left:497.00px;top:56.60px;font-size:4.8px;color:#111;transform:translateX(-50%);letter-spacing:-0.222px;">検査7</div>
<div class="a" style="left:393.20px;top:65.60px;width:232.60px;height:181.00px;background:#f3f2ef;border:0.6px solid #e4e2dd"></div>
<div class="a" style="left:393.80px;top:66.00px;width:227.60px;height:174.00px;background:#101a4a;"></div>
<div class="hc" style="left:394.00px;top:66.30px;width:15.25px;height:11.60px;"></div>
<div class="t w" style="left:401.62px;top:70.00px;font-size:4.7px;color:#f4f4ff;transform:translateX(-50%);">No</div>
<div class="hc" style="left:409.95px;top:66.30px;width:18.70px;height:11.60px;"></div>
<div class="t w" style="left:419.30px;top:70.00px;font-size:4.7px;color:#f4f4ff;transform:translateX(-50%);">NG番号</div>
<div class="hc" style="left:429.35px;top:66.30px;width:55.10px;height:11.60px;"></div>
<div class="t w" style="left:456.90px;top:70.00px;font-size:4.7px;color:#f4f4ff;transform:translateX(-50%);">日時</div>
<div class="hc" style="left:485.15px;top:66.30px;width:23.00px;height:11.60px;"></div>
<div class="t w" style="left:496.65px;top:70.00px;font-size:4.7px;color:#f4f4ff;transform:translateX(-50%);">不良項目</div>
<div class="hc" style="left:508.85px;top:66.30px;width:17.05px;height:11.60px;"></div>
<div class="t w" style="left:517.38px;top:70.00px;font-size:4.7px;color:#f4f4ff;transform:translateX(-50%);">X座標</div>
<div class="hc" style="left:526.60px;top:66.30px;width:17.55px;height:11.60px;"></div>
<div class="t w" style="left:535.38px;top:70.00px;font-size:4.7px;color:#f4f4ff;transform:translateX(-50%);">Y座標</div>
<div class="hc" style="left:544.85px;top:66.30px;width:18.90px;height:11.60px;"></div>
<div class="t w" style="left:554.30px;top:70.00px;font-size:4.7px;color:#f4f4ff;transform:translateX(-50%);">幅</div>
<div class="hc" style="left:564.45px;top:66.30px;width:18.70px;height:11.60px;"></div>
<div class="t w" style="left:573.80px;top:70.00px;font-size:4.7px;color:#f4f4ff;transform:translateX(-50%);">高さ</div>
<div class="hc" style="left:583.85px;top:66.30px;width:19.10px;height:11.60px;"></div>
<div class="t w" style="left:593.40px;top:70.00px;font-size:4.7px;color:#f4f4ff;transform:translateX(-50%);">面積</div>
<div class="hc" style="left:603.65px;top:66.30px;width:17.75px;height:11.60px;border-right:none"></div>
<div class="t w" style="left:606.60px;top:70.00px;font-size:4.7px;color:#f4f4ff;width:14.6px;overflow:hidden;height:8px;line-height:8px;margin-top:-1.65px">結果文字</div>
<div class="t w" style="left:401.62px;top:84.01px;font-size:4.9px;color:#e4e4f0;transform:translateX(-50%);">12</div>
<div class="t w" style="left:419.30px;top:84.01px;font-size:4.9px;color:#e4e4f0;transform:translateX(-50%);">97</div>
<div class="t w" style="left:456.90px;top:84.01px;font-size:4.9px;color:#e4e4f0;transform:translateX(-50%);letter-spacing:-0.193px;">2011/03/25 16:20:05.000</div>
<div class="t w" style="left:496.65px;top:83.91px;font-size:4.7px;color:#eeeef8;transform:translateX(-50%);">位置決め</div>
<div class="t w" style="left:517.38px;top:84.01px;font-size:4.9px;color:#e4e4f0;transform:translateX(-50%);">112</div>
<div class="t w" style="left:535.38px;top:84.01px;font-size:4.9px;color:#e4e4f0;transform:translateX(-50%);">212</div>
<div class="t w" style="left:554.30px;top:84.01px;font-size:4.9px;color:#e4e4f0;transform:translateX(-50%);">100</div>
<div class="t w" style="left:573.80px;top:84.01px;font-size:4.9px;color:#e4e4f0;transform:translateX(-50%);">100</div>
<div class="t w" style="left:593.40px;top:84.01px;font-size:4.9px;color:#e4e4f0;transform:translateX(-50%);">1200</div>
<div class="t" style="left:613.80px;top:84.01px;font-size:4.9px;color:#e4e4f0;-webkit-text-stroke:0.06px;width:7.6px;overflow:hidden;height:8px;line-height:8px;margin-top:-1.55px">Tes</div>
<div class="a" style="left:393.80px;top:92.07px;width:227.60px;height:0.60px;background:#9c8a9c;"></div>
<div class="t w" style="left:401.62px;top:97.43px;font-size:4.9px;color:#e4e4f0;transform:translateX(-50%);">11</div>
<div class="t w" style="left:419.30px;top:97.43px;font-size:4.9px;color:#e4e4f0;transform:translateX(-50%);">89</div>
<div class="t w" style="left:456.90px;top:97.43px;font-size:4.9px;color:#e4e4f0;transform:translateX(-50%);letter-spacing:-0.193px;">2011/03/25 16:20:02.000</div>
<div class="t w" style="left:496.65px;top:97.33px;font-size:4.7px;color:#eeeef8;transform:translateX(-50%);">周囲異常</div>
<div class="t w" style="left:517.38px;top:97.43px;font-size:4.9px;color:#e4e4f0;transform:translateX(-50%);">111</div>
<div class="t w" style="left:535.38px;top:97.43px;font-size:4.9px;color:#e4e4f0;transform:translateX(-50%);">211</div>
<div class="t w" style="left:554.30px;top:97.43px;font-size:4.9px;color:#e4e4f0;transform:translateX(-50%);">100</div>
<div class="t w" style="left:573.80px;top:97.43px;font-size:4.9px;color:#e4e4f0;transform:translateX(-50%);">100</div>
<div class="t w" style="left:593.40px;top:97.43px;font-size:4.9px;color:#e4e4f0;transform:translateX(-50%);">1100</div>
<div class="t" style="left:613.80px;top:97.43px;font-size:4.9px;color:#e4e4f0;-webkit-text-stroke:0.06px;width:7.6px;overflow:hidden;height:8px;line-height:8px;margin-top:-1.55px">Tes</div>
<div class="a" style="left:393.80px;top:105.49px;width:227.60px;height:0.60px;background:#9c8a9c;"></div>
<div class="t w" style="left:401.62px;top:110.85px;font-size:4.9px;color:#e4e4f0;transform:translateX(-50%);">10</div>
<div class="t w" style="left:419.30px;top:110.85px;font-size:4.9px;color:#e4e4f0;transform:translateX(-50%);">81</div>
<div class="t w" style="left:456.90px;top:110.85px;font-size:4.9px;color:#e4e4f0;transform:translateX(-50%);letter-spacing:-0.193px;">2011/03/25 16:18:50.000</div>
<div class="t w" style="left:496.65px;top:110.75px;font-size:4.7px;color:#eeeef8;transform:translateX(-50%);">位置決め</div>
<div class="t w" style="left:517.38px;top:110.85px;font-size:4.9px;color:#e4e4f0;transform:translateX(-50%);">110</div>
<div class="t w" style="left:535.38px;top:110.85px;font-size:4.9px;color:#e4e4f0;transform:translateX(-50%);">210</div>
<div class="t w" style="left:554.30px;top:110.85px;font-size:4.9px;color:#e4e4f0;transform:translateX(-50%);">100</div>
<div class="t w" style="left:573.80px;top:110.85px;font-size:4.9px;color:#e4e4f0;transform:translateX(-50%);">100</div>
<div class="t w" style="left:593.40px;top:110.85px;font-size:4.9px;color:#e4e4f0;transform:translateX(-50%);">1000</div>
<div class="t" style="left:613.80px;top:110.85px;font-size:4.9px;color:#e4e4f0;-webkit-text-stroke:0.06px;width:7.6px;overflow:hidden;height:8px;line-height:8px;margin-top:-1.55px">Tes</div>
<div class="a" style="left:393.80px;top:118.91px;width:227.60px;height:0.60px;background:#9c8a9c;"></div>
<div class="t w" style="left:401.62px;top:124.27px;font-size:4.9px;color:#e4e4f0;transform:translateX(-50%);">9</div>
<div class="t w" style="left:419.30px;top:124.27px;font-size:4.9px;color:#e4e4f0;transform:translateX(-50%);">73</div>
<div class="t w" style="left:456.90px;top:124.27px;font-size:4.9px;color:#e4e4f0;transform:translateX(-50%);letter-spacing:-0.193px;">2011/03/25 16:18:47.000</div>
<div class="t w" style="left:496.65px;top:124.17px;font-size:4.7px;color:#eeeef8;transform:translateX(-50%);">異物</div>
<div class="t w" style="left:517.38px;top:124.27px;font-size:4.9px;color:#e4e4f0;transform:translateX(-50%);">109</div>
<div class="t w" style="left:535.38px;top:124.27px;font-size:4.9px;color:#e4e4f0;transform:translateX(-50%);">209</div>
<div class="t w" style="left:554.30px;top:124.27px;font-size:4.9px;color:#e4e4f0;transform:translateX(-50%);">100</div>
<div class="t w" style="left:573.80px;top:124.27px;font-size:4.9px;color:#e4e4f0;transform:translateX(-50%);">100</div>
<div class="t w" style="left:593.40px;top:124.27px;font-size:4.9px;color:#e4e4f0;transform:translateX(-50%);">900</div>
<div class="t" style="left:613.80px;top:124.27px;font-size:4.9px;color:#e4e4f0;-webkit-text-stroke:0.06px;width:7.6px;overflow:hidden;height:8px;line-height:8px;margin-top:-1.55px">Tes</div>
<div class="a" style="left:393.80px;top:132.33px;width:227.60px;height:0.60px;background:#9c8a9c;"></div>
<div class="t w" style="left:401.62px;top:137.69px;font-size:4.9px;color:#e4e4f0;transform:translateX(-50%);">8</div>
<div class="t w" style="left:419.30px;top:137.69px;font-size:4.9px;color:#e4e4f0;transform:translateX(-50%);">65</div>
<div class="t w" style="left:456.90px;top:137.69px;font-size:4.9px;color:#e4e4f0;transform:translateX(-50%);letter-spacing:-0.193px;">2011/03/25 16:18:45.000</div>
<div class="t w" style="left:496.65px;top:137.59px;font-size:4.7px;color:#eeeef8;transform:translateX(-50%);">取込異常</div>
<div class="t w" style="left:517.38px;top:137.69px;font-size:4.9px;color:#e4e4f0;transform:translateX(-50%);">108</div>
<div class="t w" style="left:535.38px;top:137.69px;font-size:4.9px;color:#e4e4f0;transform:translateX(-50%);">208</div>
<div class="t w" style="left:554.30px;top:137.69px;font-size:4.9px;color:#e4e4f0;transform:translateX(-50%);">100</div>
<div class="t w" style="left:573.80px;top:137.69px;font-size:4.9px;color:#e4e4f0;transform:translateX(-50%);">100</div>
<div class="t w" style="left:593.40px;top:137.69px;font-size:4.9px;color:#e4e4f0;transform:translateX(-50%);">800</div>
<div class="t" style="left:613.80px;top:137.69px;font-size:4.9px;color:#e4e4f0;-webkit-text-stroke:0.06px;width:7.6px;overflow:hidden;height:8px;line-height:8px;margin-top:-1.55px">Tes</div>
<div class="a" style="left:393.80px;top:145.75px;width:227.60px;height:0.60px;background:#9c8a9c;"></div>
<div class="t w" style="left:401.62px;top:151.11px;font-size:4.9px;color:#e4e4f0;transform:translateX(-50%);">7</div>
<div class="t w" style="left:419.30px;top:151.11px;font-size:4.9px;color:#e4e4f0;transform:translateX(-50%);">57</div>
<div class="t w" style="left:456.90px;top:151.11px;font-size:4.9px;color:#e4e4f0;transform:translateX(-50%);letter-spacing:-0.193px;">2011/03/25 16:18:42.000</div>
<div class="t w" style="left:496.65px;top:151.01px;font-size:4.7px;color:#eeeef8;transform:translateX(-50%);">位置決め</div>
<div class="t w" style="left:517.38px;top:151.11px;font-size:4.9px;color:#e4e4f0;transform:translateX(-50%);">107</div>
<div class="t w" style="left:535.38px;top:151.11px;font-size:4.9px;color:#e4e4f0;transform:translateX(-50%);">207</div>
<div class="t w" style="left:554.30px;top:151.11px;font-size:4.9px;color:#e4e4f0;transform:translateX(-50%);">100</div>
<div class="t w" style="left:573.80px;top:151.11px;font-size:4.9px;color:#e4e4f0;transform:translateX(-50%);">100</div>
<div class="t w" style="left:593.40px;top:151.11px;font-size:4.9px;color:#e4e4f0;transform:translateX(-50%);">700</div>
<div class="t" style="left:613.80px;top:151.11px;font-size:4.9px;color:#e4e4f0;-webkit-text-stroke:0.06px;width:7.6px;overflow:hidden;height:8px;line-height:8px;margin-top:-1.55px">Tes</div>
<div class="a" style="left:393.80px;top:159.17px;width:227.60px;height:0.60px;background:#9c8a9c;"></div>
<div class="t w" style="left:401.62px;top:164.53px;font-size:4.9px;color:#e4e4f0;transform:translateX(-50%);">6</div>
<div class="t w" style="left:419.30px;top:164.53px;font-size:4.9px;color:#e4e4f0;transform:translateX(-50%);">49</div>
<div class="t w" style="left:456.90px;top:164.53px;font-size:4.9px;color:#e4e4f0;transform:translateX(-50%);letter-spacing:-0.193px;">2011/03/25 16:18:40.000</div>
<div class="t w" style="left:496.65px;top:164.43px;font-size:4.7px;color:#eeeef8;transform:translateX(-50%);">位置決め</div>
<div class="t w" style="left:517.38px;top:164.53px;font-size:4.9px;color:#e4e4f0;transform:translateX(-50%);">106</div>
<div class="t w" style="left:535.38px;top:164.53px;font-size:4.9px;color:#e4e4f0;transform:translateX(-50%);">206</div>
<div class="t w" style="left:554.30px;top:164.53px;font-size:4.9px;color:#e4e4f0;transform:translateX(-50%);">100</div>
<div class="t w" style="left:573.80px;top:164.53px;font-size:4.9px;color:#e4e4f0;transform:translateX(-50%);">100</div>
<div class="t w" style="left:593.40px;top:164.53px;font-size:4.9px;color:#e4e4f0;transform:translateX(-50%);">600</div>
<div class="t" style="left:613.80px;top:164.53px;font-size:4.9px;color:#e4e4f0;-webkit-text-stroke:0.06px;width:7.6px;overflow:hidden;height:8px;line-height:8px;margin-top:-1.55px">Tes</div>
<div class="a" style="left:393.80px;top:172.59px;width:227.60px;height:0.60px;background:#9c8a9c;"></div>
<div class="t w" style="left:401.62px;top:177.95px;font-size:4.9px;color:#e4e4f0;transform:translateX(-50%);">5</div>
<div class="t w" style="left:419.30px;top:177.95px;font-size:4.9px;color:#e4e4f0;transform:translateX(-50%);">41</div>
<div class="t w" style="left:456.90px;top:177.95px;font-size:4.9px;color:#e4e4f0;transform:translateX(-50%);letter-spacing:-0.193px;">2011/03/25 16:18:37.000</div>
<div class="t w" style="left:496.65px;top:177.85px;font-size:4.7px;color:#eeeef8;transform:translateX(-50%);letter-spacing:-0.411px;">照度エラー</div>
<div class="t w" style="left:517.38px;top:177.95px;font-size:4.9px;color:#e4e4f0;transform:translateX(-50%);">105</div>
<div class="t w" style="left:535.38px;top:177.95px;font-size:4.9px;color:#e4e4f0;transform:translateX(-50%);">205</div>
<div class="t w" style="left:554.30px;top:177.95px;font-size:4.9px;color:#e4e4f0;transform:translateX(-50%);">100</div>
<div class="t w" style="left:573.80px;top:177.95px;font-size:4.9px;color:#e4e4f0;transform:translateX(-50%);">100</div>
<div class="t w" style="left:593.40px;top:177.95px;font-size:4.9px;color:#e4e4f0;transform:translateX(-50%);">500</div>
<div class="t" style="left:613.80px;top:177.95px;font-size:4.9px;color:#e4e4f0;-webkit-text-stroke:0.06px;width:7.6px;overflow:hidden;height:8px;line-height:8px;margin-top:-1.55px">Tes</div>
<div class="a" style="left:393.80px;top:186.01px;width:227.60px;height:0.60px;background:#9c8a9c;"></div>
<div class="t w" style="left:401.62px;top:191.37px;font-size:4.9px;color:#e4e4f0;transform:translateX(-50%);">4</div>
<div class="t w" style="left:419.30px;top:191.37px;font-size:4.9px;color:#e4e4f0;transform:translateX(-50%);">33</div>
<div class="t w" style="left:456.90px;top:191.37px;font-size:4.9px;color:#e4e4f0;transform:translateX(-50%);letter-spacing:-0.193px;">2011/03/25 16:18:35.000</div>
<div class="t w" style="left:496.65px;top:191.27px;font-size:4.7px;color:#eeeef8;transform:translateX(-50%);">異物</div>
<div class="t w" style="left:517.38px;top:191.37px;font-size:4.9px;color:#e4e4f0;transform:translateX(-50%);">104</div>
<div class="t w" style="left:535.38px;top:191.37px;font-size:4.9px;color:#e4e4f0;transform:translateX(-50%);">204</div>
<div class="t w" style="left:554.30px;top:191.37px;font-size:4.9px;color:#e4e4f0;transform:translateX(-50%);">100</div>
<div class="t w" style="left:573.80px;top:191.37px;font-size:4.9px;color:#e4e4f0;transform:translateX(-50%);">100</div>
<div class="t w" style="left:593.40px;top:191.37px;font-size:4.9px;color:#e4e4f0;transform:translateX(-50%);">400</div>
<div class="t" style="left:613.80px;top:191.37px;font-size:4.9px;color:#e4e4f0;-webkit-text-stroke:0.06px;width:7.6px;overflow:hidden;height:8px;line-height:8px;margin-top:-1.55px">Tes</div>
<div class="a" style="left:393.80px;top:199.43px;width:227.60px;height:0.60px;background:#9c8a9c;"></div>
<div class="t w" style="left:401.62px;top:204.79px;font-size:4.9px;color:#e4e4f0;transform:translateX(-50%);">3</div>
<div class="t w" style="left:419.30px;top:204.79px;font-size:4.9px;color:#e4e4f0;transform:translateX(-50%);">25</div>
<div class="t w" style="left:456.90px;top:204.79px;font-size:4.9px;color:#e4e4f0;transform:translateX(-50%);letter-spacing:-0.193px;">2011/03/25 16:18:32.000</div>
<div class="t w" style="left:496.65px;top:204.69px;font-size:4.7px;color:#eeeef8;transform:translateX(-50%);">キズ</div>
<div class="t w" style="left:517.38px;top:204.79px;font-size:4.9px;color:#e4e4f0;transform:translateX(-50%);">103</div>
<div class="t w" style="left:535.38px;top:204.79px;font-size:4.9px;color:#e4e4f0;transform:translateX(-50%);">203</div>
<div class="t w" style="left:554.30px;top:204.79px;font-size:4.9px;color:#e4e4f0;transform:translateX(-50%);">100</div>
<div class="t w" style="left:573.80px;top:204.79px;font-size:4.9px;color:#e4e4f0;transform:translateX(-50%);">100</div>
<div class="t w" style="left:593.40px;top:204.79px;font-size:4.9px;color:#e4e4f0;transform:translateX(-50%);">300</div>
<div class="t" style="left:613.80px;top:204.79px;font-size:4.9px;color:#e4e4f0;-webkit-text-stroke:0.06px;width:7.6px;overflow:hidden;height:8px;line-height:8px;margin-top:-1.55px">Tes</div>
<div class="a" style="left:393.80px;top:212.85px;width:227.60px;height:0.60px;background:#9c8a9c;"></div>
<div class="t w" style="left:401.62px;top:218.21px;font-size:4.9px;color:#e4e4f0;transform:translateX(-50%);">2</div>
<div class="t w" style="left:419.30px;top:218.21px;font-size:4.9px;color:#e4e4f0;transform:translateX(-50%);">17</div>
<div class="t w" style="left:456.90px;top:218.21px;font-size:4.9px;color:#e4e4f0;transform:translateX(-50%);letter-spacing:-0.193px;">2011/03/25 16:18:30.000</div>
<div class="t w" style="left:496.65px;top:218.11px;font-size:4.7px;color:#eeeef8;transform:translateX(-50%);">キズ</div>
<div class="t w" style="left:517.38px;top:218.21px;font-size:4.9px;color:#e4e4f0;transform:translateX(-50%);">102</div>
<div class="t w" style="left:535.38px;top:218.21px;font-size:4.9px;color:#e4e4f0;transform:translateX(-50%);">202</div>
<div class="t w" style="left:554.30px;top:218.21px;font-size:4.9px;color:#e4e4f0;transform:translateX(-50%);">100</div>
<div class="t w" style="left:573.80px;top:218.21px;font-size:4.9px;color:#e4e4f0;transform:translateX(-50%);">100</div>
<div class="t w" style="left:593.40px;top:218.21px;font-size:4.9px;color:#e4e4f0;transform:translateX(-50%);">200</div>
<div class="t" style="left:613.80px;top:218.21px;font-size:4.9px;color:#e4e4f0;-webkit-text-stroke:0.06px;width:7.6px;overflow:hidden;height:8px;line-height:8px;margin-top:-1.55px">Tes</div>
<div class="a" style="left:393.80px;top:226.27px;width:227.60px;height:0.60px;background:#9c8a9c;"></div>
<div class="t w" style="left:401.62px;top:231.63px;font-size:4.9px;color:#e4e4f0;transform:translateX(-50%);">1</div>
<div class="t w" style="left:419.30px;top:231.63px;font-size:4.9px;color:#e4e4f0;transform:translateX(-50%);">9</div>
<div class="t w" style="left:456.90px;top:231.63px;font-size:4.9px;color:#e4e4f0;transform:translateX(-50%);letter-spacing:-0.193px;">2011/03/25 16:18:27.000</div>
<div class="t w" style="left:496.65px;top:231.53px;font-size:4.7px;color:#eeeef8;transform:translateX(-50%);">取込異常</div>
<div class="t w" style="left:517.38px;top:231.63px;font-size:4.9px;color:#e4e4f0;transform:translateX(-50%);">101</div>
<div class="t w" style="left:535.38px;top:231.63px;font-size:4.9px;color:#e4e4f0;transform:translateX(-50%);">201</div>
<div class="t w" style="left:554.30px;top:231.63px;font-size:4.9px;color:#e4e4f0;transform:translateX(-50%);">100</div>
<div class="t w" style="left:573.80px;top:231.63px;font-size:4.9px;color:#e4e4f0;transform:translateX(-50%);">100</div>
<div class="t w" style="left:593.40px;top:231.63px;font-size:4.9px;color:#e4e4f0;transform:translateX(-50%);">100</div>
<div class="t" style="left:613.80px;top:231.63px;font-size:4.9px;color:#e4e4f0;-webkit-text-stroke:0.06px;width:7.6px;overflow:hidden;height:8px;line-height:8px;margin-top:-1.55px">Tes</div>
<div class="a" style="left:393.80px;top:239.69px;width:227.60px;height:0.60px;background:#9c8a9c;"></div>
<div class="a" style="left:393.80px;top:77.90px;width:227.60px;height:1.10px;background:#d8d2dc;"></div>
<div class="a" style="left:409.30px;top:79.00px;width:0.60px;height:161.04px;background:#9c8a9c;"></div>
<div class="a" style="left:428.70px;top:79.00px;width:0.60px;height:161.04px;background:#9c8a9c;"></div>
<div class="a" style="left:484.50px;top:79.00px;width:0.60px;height:161.04px;background:#9c8a9c;"></div>
<div class="a" style="left:508.20px;top:79.00px;width:0.60px;height:161.04px;background:#9c8a9c;"></div>
<div class="a" style="left:525.95px;top:79.00px;width:0.60px;height:161.04px;background:#9c8a9c;"></div>
<div class="a" style="left:544.20px;top:79.00px;width:0.60px;height:161.04px;background:#9c8a9c;"></div>
<div class="a" style="left:563.80px;top:79.00px;width:0.60px;height:161.04px;background:#9c8a9c;"></div>
<div class="a" style="left:583.20px;top:79.00px;width:0.60px;height:161.04px;background:#9c8a9c;"></div>
<div class="a" style="left:603.00px;top:79.00px;width:0.60px;height:161.04px;background:#9c8a9c;"></div>
<div class="a" style="left:393.80px;top:240.00px;width:227.60px;height:6.20px;background:#efede8;"></div>
<div class="a" style="left:393.80px;top:240.20px;width:5.80px;height:5.80px;background:#d4d0c8;border:0.6px solid;border-color:#fff #5a5852 #5a5852 #fff"></div>
<div class="a" style="left:615.20px;top:240.20px;width:5.80px;height:5.80px;background:#d4d0c8;border:0.6px solid;border-color:#fff #5a5852 #5a5852 #fff"></div>
<div class="a" style="left:399.60px;top:240.20px;width:205.00px;height:5.80px;background:#d4d0c8;border:0.6px solid;border-color:#fff #5a5852 #5a5852 #fff"></div>
<div class="t" style="left:395.00px;top:241.80px;font-size:2.6px;color:#000;">◀</div>
<div class="t" style="left:617.00px;top:241.80px;font-size:2.6px;color:#000;">▶</div>
<div class="grp" style="left:389.40px;top:258.60px;width:237.00px;height:37.40px;"></div>
<div class="a" style="left:394.00px;top:256.60px;width:79.00px;height:6.00px;background:#d4d0c8;"></div>
<div class="t" style="left:395.20px;top:257.60px;font-size:4.8px;color:#111;letter-spacing:0.342px;">PC起動/停止SW</div>
<div class="t" style="left:440.30px;top:257.60px;font-size:4.8px;color:#111;letter-spacing:-0.105px;">照度</div>
<div class="t" style="left:452.80px;top:257.60px;font-size:4.8px;color:#111;letter-spacing:-0.101px;">品種切替</div>
<div class="btn" style="left:396.80px;top:264.50px;width:27.60px;height:11.40px;"></div>
<div class="t" style="left:410.60px;top:267.60px;font-size:4.8px;color:#111;transform:translateX(-50%);letter-spacing:-0.151px;">一括起動</div>
<div class="btn" style="left:396.80px;top:278.80px;width:27.60px;height:11.40px;"></div>
<div class="t" style="left:410.60px;top:281.90px;font-size:4.8px;color:#111;transform:translateX(-50%);letter-spacing:-0.151px;">一括終了</div>
<div class="a" style="left:441.00px;top:265.20px;width:16.00px;height:6.90px;background:#f01010;"></div>
<div class="t" style="left:449.00px;top:266.40px;font-size:4.4px;color:#400;transform:translateX(-50%);letter-spacing:0.055px;">検査1</div>
<div class="btn" style="left:440.70px;top:274.30px;width:16.60px;height:9.00px;"></div>
<div class="t" style="left:449.00px;top:276.35px;font-size:4.5px;color:#111;transform:translateX(-50%);">ON</div>
<div class="sunk" style="left:441.00px;top:285.40px;width:16.00px;height:6.20px;"></div>
<div class="t" style="left:456.00px;top:286.20px;font-size:4.8px;color:#111;transform:translateX(-100%);">0</div>
<div class="a" style="left:460.36px;top:265.20px;width:16.00px;height:6.90px;background:#f01010;"></div>
<div class="t" style="left:468.36px;top:266.40px;font-size:4.4px;color:#400;transform:translateX(-50%);letter-spacing:0.055px;">検査2</div>
<div class="btn" style="left:460.06px;top:274.30px;width:16.60px;height:9.00px;"></div>
<div class="t" style="left:468.36px;top:276.35px;font-size:4.5px;color:#111;transform:translateX(-50%);">ON</div>
<div class="sunk" style="left:460.36px;top:285.40px;width:16.00px;height:6.20px;"></div>
<div class="t" style="left:475.36px;top:286.20px;font-size:4.8px;color:#111;transform:translateX(-100%);">0</div>
<div class="a" style="left:479.72px;top:265.20px;width:16.00px;height:6.90px;background:#f01010;"></div>
<div class="t" style="left:487.72px;top:266.40px;font-size:4.4px;color:#400;transform:translateX(-50%);letter-spacing:0.055px;">検査3</div>
<div class="btn" style="left:479.42px;top:274.30px;width:16.60px;height:9.00px;"></div>
<div class="t" style="left:487.72px;top:276.35px;font-size:4.5px;color:#111;transform:translateX(-50%);">ON</div>
<div class="sunk" style="left:479.72px;top:285.40px;width:16.00px;height:6.20px;"></div>
<div class="t" style="left:494.72px;top:286.20px;font-size:4.8px;color:#111;transform:translateX(-100%);">0</div>
<div class="a" style="left:499.08px;top:265.20px;width:16.00px;height:6.90px;background:#f01010;"></div>
<div class="t" style="left:507.08px;top:266.40px;font-size:4.4px;color:#400;transform:translateX(-50%);letter-spacing:0.055px;">検査4</div>
<div class="btn" style="left:498.78px;top:274.30px;width:16.60px;height:9.00px;"></div>
<div class="t" style="left:507.08px;top:276.35px;font-size:4.5px;color:#111;transform:translateX(-50%);">ON</div>
<div class="sunk" style="left:499.08px;top:285.40px;width:16.00px;height:6.20px;"></div>
<div class="t" style="left:514.08px;top:286.20px;font-size:4.8px;color:#111;transform:translateX(-100%);">0</div>
<div class="a" style="left:518.44px;top:265.20px;width:16.00px;height:6.90px;background:#f01010;"></div>
<div class="t" style="left:526.44px;top:266.40px;font-size:4.4px;color:#400;transform:translateX(-50%);letter-spacing:0.055px;">検査5</div>
<div class="btn" style="left:518.14px;top:274.30px;width:16.60px;height:9.00px;"></div>
<div class="t" style="left:526.44px;top:276.35px;font-size:4.5px;color:#111;transform:translateX(-50%);">ON</div>
<div class="sunk" style="left:518.44px;top:285.40px;width:16.00px;height:6.20px;"></div>
<div class="t" style="left:533.44px;top:286.20px;font-size:4.8px;color:#111;transform:translateX(-100%);">0</div>
<div class="a" style="left:537.80px;top:265.20px;width:16.00px;height:6.90px;background:#f01010;"></div>
<div class="t" style="left:545.80px;top:266.40px;font-size:4.4px;color:#400;transform:translateX(-50%);letter-spacing:0.055px;">検査6</div>
<div class="btn" style="left:537.50px;top:274.30px;width:16.60px;height:9.00px;"></div>
<div class="t" style="left:545.80px;top:276.35px;font-size:4.5px;color:#111;transform:translateX(-50%);">ON</div>
<div class="sunk" style="left:537.80px;top:285.40px;width:16.00px;height:6.20px;"></div>
<div class="t" style="left:552.80px;top:286.20px;font-size:4.8px;color:#111;transform:translateX(-100%);">0</div>
<div class="a" style="left:557.16px;top:265.20px;width:16.00px;height:6.90px;background:#f01010;"></div>
<div class="t" style="left:565.16px;top:266.40px;font-size:4.4px;color:#400;transform:translateX(-50%);letter-spacing:0.055px;">検査7</div>
<div class="btn" style="left:556.86px;top:274.30px;width:16.60px;height:9.00px;"></div>
<div class="t" style="left:565.16px;top:276.35px;font-size:4.5px;color:#111;transform:translateX(-50%);">ON</div>
<div class="sunk" style="left:557.16px;top:285.40px;width:16.00px;height:6.20px;"></div>
<div class="t" style="left:572.16px;top:286.20px;font-size:4.8px;color:#111;transform:translateX(-100%);">0</div>
<div class="t" style="left:430.00px;top:286.20px;font-size:4.6px;color:#111;letter-spacing:0.198px;">照度</div>
<div class="btn" style="left:581.20px;top:264.60px;width:40.20px;height:10.40px;"></div>
<div class="t" style="left:601.30px;top:267.20px;font-size:4.8px;color:#111;transform:translateX(-50%);letter-spacing:-0.240px;">パスワード</div>
<div class="btn" style="left:581.20px;top:281.10px;width:40.20px;height:10.40px;"></div>
<div class="t" style="left:601.30px;top:283.70px;font-size:4.8px;color:#111;transform:translateX(-50%);letter-spacing:-0.051px;">品種切替</div>
<div class="grp" style="left:389.60px;top:300.60px;width:236.80px;height:21.20px;"></div>
<div class="a" style="left:393.80px;top:298.00px;width:24.40px;height:6.00px;background:#d4d0c8;"></div>
<div class="t" style="left:395.00px;top:299.40px;font-size:4.8px;color:#111;letter-spacing:-0.440px;">モード切替</div>
<div class="a" style="left:403.29999999999995px;top:306.09999999999997px;width:4.2px;height:4.2px;border-radius:50%;background:#fff;border:0.6px solid;border-color:#6e6b66 #f4f2ee #f4f2ee #6e6b66"></div>
<div class="a" style="left:404.7px;top:307.5px;width:1.4px;height:1.4px;border-radius:50%;background:#000"></div>
<div class="a" style="left:444.5px;top:306.09999999999997px;width:4.2px;height:4.2px;border-radius:50%;background:#fff;border:0.6px solid;border-color:#6e6b66 #f4f2ee #f4f2ee #6e6b66"></div>
<div class="t" style="left:410.60px;top:306.00px;font-size:4.6px;color:#111;letter-spacing:-0.277px;">検査モード</div>
<div class="t" style="left:451.60px;top:306.00px;font-size:4.6px;color:#111;letter-spacing:-0.227px;"><span style="font-size:5.4px;line-height:0">View</span>モード</div>
<div class="sunk" style="left:402.60px;top:313.20px;width:170.40px;height:6.60px;"></div>
<div class="t" style="left:404.00px;top:314.20px;font-size:4.5px;color:#111;letter-spacing:-0.072px;">製品名: UKV1254</div>
<div class="t" style="left:442.60px;top:314.20px;font-size:4.5px;color:#111;letter-spacing:0.001px;">Lot No: 20130120</div>
<div class="btn" style="left:581.40px;top:306.00px;width:40.00px;height:10.80px;"></div>
<div class="t" style="left:601.40px;top:309.20px;font-size:4.4px;color:#a09c94;transform:translateX(-50%);text-shadow:0.5px 0.5px 0 #fff;letter-spacing:0.273px;">履歴情報表示</div>
<div class="grp" style="left:389.60px;top:327.40px;width:236.80px;height:19.00px;"></div>
<div class="a" style="left:393.40px;top:325.00px;width:47.00px;height:6.00px;background:#d4d0c8;"></div>
<div class="t" style="left:394.60px;top:326.00px;font-size:4.8px;color:#111;letter-spacing:-0.338px;">日報ファイル名称入力</div>
<div class="sunk" style="left:402.00px;top:334.00px;width:170.60px;height:8.60px;"></div>
<div class="btn" style="left:581.20px;top:331.50px;width:40.20px;height:10.20px;"></div>
<div class="t" style="left:601.30px;top:334.00px;font-size:4.8px;color:#111;transform:translateX(-50%);letter-spacing:0.095px;">保存</div>
<div class="grp" style="left:389.60px;top:352.40px;width:236.80px;height:46.20px;"></div>
<div class="a" style="left:393.60px;top:350.60px;width:21.00px;height:6.00px;background:#d4d0c8;"></div>
<div class="t" style="left:394.80px;top:351.50px;font-size:4.8px;color:#111;letter-spacing:-0.151px;">装置状態</div>
<div class="t" style="left:434.30px;top:360.60px;font-size:4.6px;color:#111;transform:translateX(-50%);letter-spacing:0.291px;">整 列 機</div>
<div class="a" style="left:421.40px;top:367.20px;width:25.80px;height:6.00px;background:#44c82c;"></div>
<div class="t" style="left:434.30px;top:368.10px;font-size:4.3px;color:#083008;transform:translateX(-50%);font-weight:bold;letter-spacing:-0.147px;">運転準備</div>
<div class="a" style="left:421.40px;top:376.60px;width:25.80px;height:6.20px;background:#f41616;"></div>
<div class="t" style="left:434.30px;top:377.60px;font-size:4.3px;color:#400;transform:translateX(-50%);font-weight:bold;letter-spacing:0.603px;">─全自動─</div>
<div class="a" style="left:421.40px;top:384.80px;width:25.80px;height:5.80px;border:0.7px solid;border-color:#55534f #f8f7f4 #f8f7f4 #55534f"></div>
<div class="t" style="left:446.40px;top:385.40px;font-size:4.8px;color:#111;transform:translateX(-100%);">600</div>
<div class="t" style="left:464.05px;top:360.60px;font-size:4.6px;color:#111;transform:translateX(-50%);letter-spacing:0.291px;">打 栓 機</div>
<div class="a" style="left:451.15px;top:367.20px;width:25.80px;height:6.00px;background:#44c82c;"></div>
<div class="t" style="left:464.05px;top:368.10px;font-size:4.3px;color:#083008;transform:translateX(-50%);font-weight:bold;letter-spacing:-0.147px;">運転準備</div>
<div class="a" style="left:451.15px;top:376.60px;width:25.80px;height:6.20px;background:#f41616;"></div>
<div class="t" style="left:464.05px;top:377.60px;font-size:4.3px;color:#400;transform:translateX(-50%);font-weight:bold;letter-spacing:0.603px;">─全自動─</div>
<div class="a" style="left:451.15px;top:384.80px;width:25.80px;height:5.80px;border:0.7px solid;border-color:#55534f #f8f7f4 #f8f7f4 #55534f"></div>
<div class="t" style="left:476.15px;top:385.40px;font-size:4.8px;color:#111;transform:translateX(-100%);">0</div>
<div class="t" style="left:493.80px;top:360.60px;font-size:4.6px;color:#111;transform:translateX(-50%);letter-spacing:0.002px;">搬送装置</div>
<div class="a" style="left:480.90px;top:367.20px;width:25.80px;height:6.00px;background:#44c82c;"></div>
<div class="t" style="left:493.80px;top:368.10px;font-size:4.3px;color:#083008;transform:translateX(-50%);font-weight:bold;letter-spacing:-0.147px;">運転準備</div>
<div class="a" style="left:480.90px;top:376.60px;width:25.80px;height:6.20px;background:#f41616;"></div>
<div class="t" style="left:493.80px;top:377.60px;font-size:4.3px;color:#400;transform:translateX(-50%);font-weight:bold;letter-spacing:0.603px;">─全自動─</div>
<div class="a" style="left:480.90px;top:384.80px;width:25.80px;height:5.80px;border:0.7px solid;border-color:#55534f #f8f7f4 #f8f7f4 #55534f"></div>
<div class="t" style="left:505.90px;top:385.40px;font-size:4.8px;color:#111;transform:translateX(-100%);">6</div>
<div class="t" style="left:523.55px;top:360.60px;font-size:4.6px;color:#111;transform:translateX(-50%);letter-spacing:0.083px;">内面検査機</div>
<div class="a" style="left:510.65px;top:367.20px;width:25.80px;height:6.00px;background:#44c82c;"></div>
<div class="t" style="left:523.55px;top:368.10px;font-size:4.3px;color:#083008;transform:translateX(-50%);font-weight:bold;letter-spacing:-0.147px;">運転準備</div>
<div class="a" style="left:510.65px;top:376.60px;width:25.80px;height:6.20px;background:#f41616;"></div>
<div class="t" style="left:523.55px;top:377.60px;font-size:4.3px;color:#400;transform:translateX(-50%);font-weight:bold;letter-spacing:0.603px;">─全自動─</div>
<div class="a" style="left:510.65px;top:384.80px;width:25.80px;height:5.80px;border:0.7px solid;border-color:#55534f #f8f7f4 #f8f7f4 #55534f"></div>
<div class="t" style="left:535.65px;top:385.40px;font-size:4.8px;color:#111;transform:translateX(-100%);">6</div>
<div class="t" style="left:553.30px;top:360.60px;font-size:4.6px;color:#111;transform:translateX(-50%);letter-spacing:0.002px;">移載装置</div>
<div class="a" style="left:540.40px;top:367.20px;width:25.80px;height:6.00px;background:#44c82c;"></div>
<div class="t" style="left:553.30px;top:368.10px;font-size:4.3px;color:#083008;transform:translateX(-50%);font-weight:bold;letter-spacing:-0.147px;">運転準備</div>
<div class="a" style="left:540.40px;top:376.60px;width:25.80px;height:6.20px;background:#f41616;"></div>
<div class="t" style="left:553.30px;top:377.60px;font-size:4.3px;color:#400;transform:translateX(-50%);font-weight:bold;letter-spacing:0.603px;">─全自動─</div>
<div class="a" style="left:540.40px;top:384.80px;width:25.80px;height:5.80px;border:0.7px solid;border-color:#55534f #f8f7f4 #f8f7f4 #55534f"></div>
<div class="t" style="left:565.40px;top:385.40px;font-size:4.8px;color:#111;transform:translateX(-100%);">0</div>
<div class="t" style="left:396.20px;top:377.00px;font-size:4.6px;color:#111;letter-spacing:0.102px;">運転状態</div>
<div class="t" style="left:396.20px;top:385.60px;font-size:4.6px;color:#111;letter-spacing:0.068px;">生産数</div>
<div class="a" style="left:128.00px;top:407.60px;width:512.00px;height:8.40px;background:#d4d0c8;"></div>
<div class="a" style="left:128.00px;top:407.50px;width:512.00px;height:0.60px;background:#f4f2ee;"></div>
<div class="t" style="left:130.00px;top:409.80px;font-size:4.6px;color:#222;">ﾚﾃﾞｨ</div>
<div class="a" style="left:390.00px;top:409.20px;width:120.00px;height:6.20px;border:0.7px solid;border-color:#8d8a84 #f8f7f4 #f8f7f4 #8d8a84"></div>
<div class="a" style="left:511.50px;top:409.20px;width:120.00px;height:6.20px;border:0.7px solid;border-color:#8d8a84 #f8f7f4 #f8f7f4 #8d8a84"></div>
<svg class="a" style="left:633px;top:409px" width="7" height="7" viewBox="0 0 7 7"><path d="M6.5 1 L1 6.5 M6.5 3 L3 6.5 M6.5 5 L5 6.5" stroke="#8d8a84" stroke-width="0.8"/><path d="M6.5 0.2 L0.2 6.5" stroke="#fff" stroke-width="0.5"/></svg>
</body></html>
